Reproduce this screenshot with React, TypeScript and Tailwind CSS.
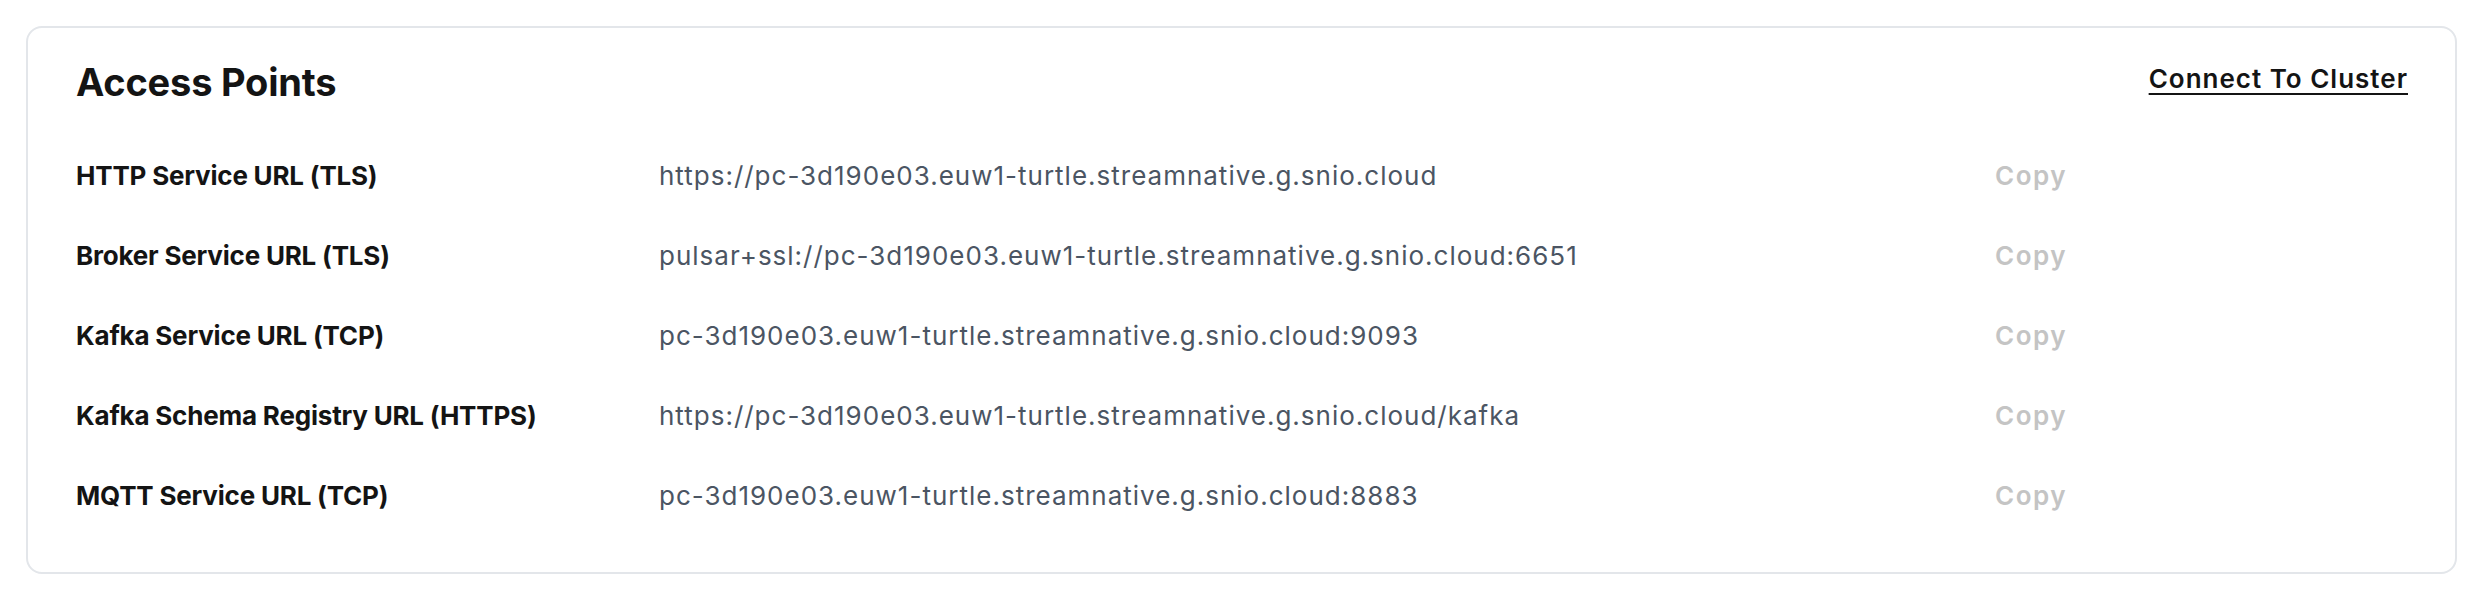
import React from 'react';

interface AccessPoint {
    label: string;
    url: string;
}

const accessPoints: AccessPoint[] = [
    { label: 'HTTP Service URL (TLS)', url: 'https://pc-3d190e03.euw1-turtle.streamnative.g.snio.cloud' },
    { label: 'Broker Service URL (TLS)', url: 'pulsar+ssl://pc-3d190e03.euw1-turtle.streamnative.g.snio.cloud:6651' },
    { label: 'Kafka Service URL (TCP)', url: 'pc-3d190e03.euw1-turtle.streamnative.g.snio.cloud:9093' },
    { label: 'Kafka Schema Registry URL (HTTPS)', url: 'https://pc-3d190e03.euw1-turtle.streamnative.g.snio.cloud/kafka' },
    { label: 'MQTT Service URL (TCP)', url: 'pc-3d190e03.euw1-turtle.streamnative.g.snio.cloud:8883' }
];

export default function App() {
    return (
        <div className="min-h-screen bg-white pt-[26px] pl-[26px] pr-[31px] font-['Inter',sans-serif]">
            <div className="rounded-[16px] border-2 border-[#e3e6ea] bg-white pl-[48px] pr-[47px] pt-[34px] pb-[37px]">
                <div className="flex h-[40px] items-center justify-between">
                    <h2 className="text-[38px] font-bold tracking-[-0.2px] text-[#141414]">Access Points</h2>
                    <button
                        type="button"
                        className="-mt-[8px] text-[26px] font-semibold tracking-[1px] text-[#141414] underline underline-offset-[5px] decoration-2"
                    >
                        Connect To Cluster
                    </button>
                </div>
                <div className="mt-[33px]">
                    {accessPoints.map((point) => (
                        <div key={point.label} className="flex h-[80px] items-center">
                            <div className="w-[583px] text-[26px] font-bold tracking-[-0.2px] text-[#141414]">
                                {point.label}
                            </div>
                            <div className="w-[1336px] text-[26px] tracking-[1px] text-[#4b5563]">{point.url}</div>
                            <button type="button" className="text-[26px] font-semibold tracking-[1.5px] text-[#c4c4c4]">
                                Copy
                            </button>
                        </div>
                    ))}
                </div>
            </div>
        </div>
    );
}
